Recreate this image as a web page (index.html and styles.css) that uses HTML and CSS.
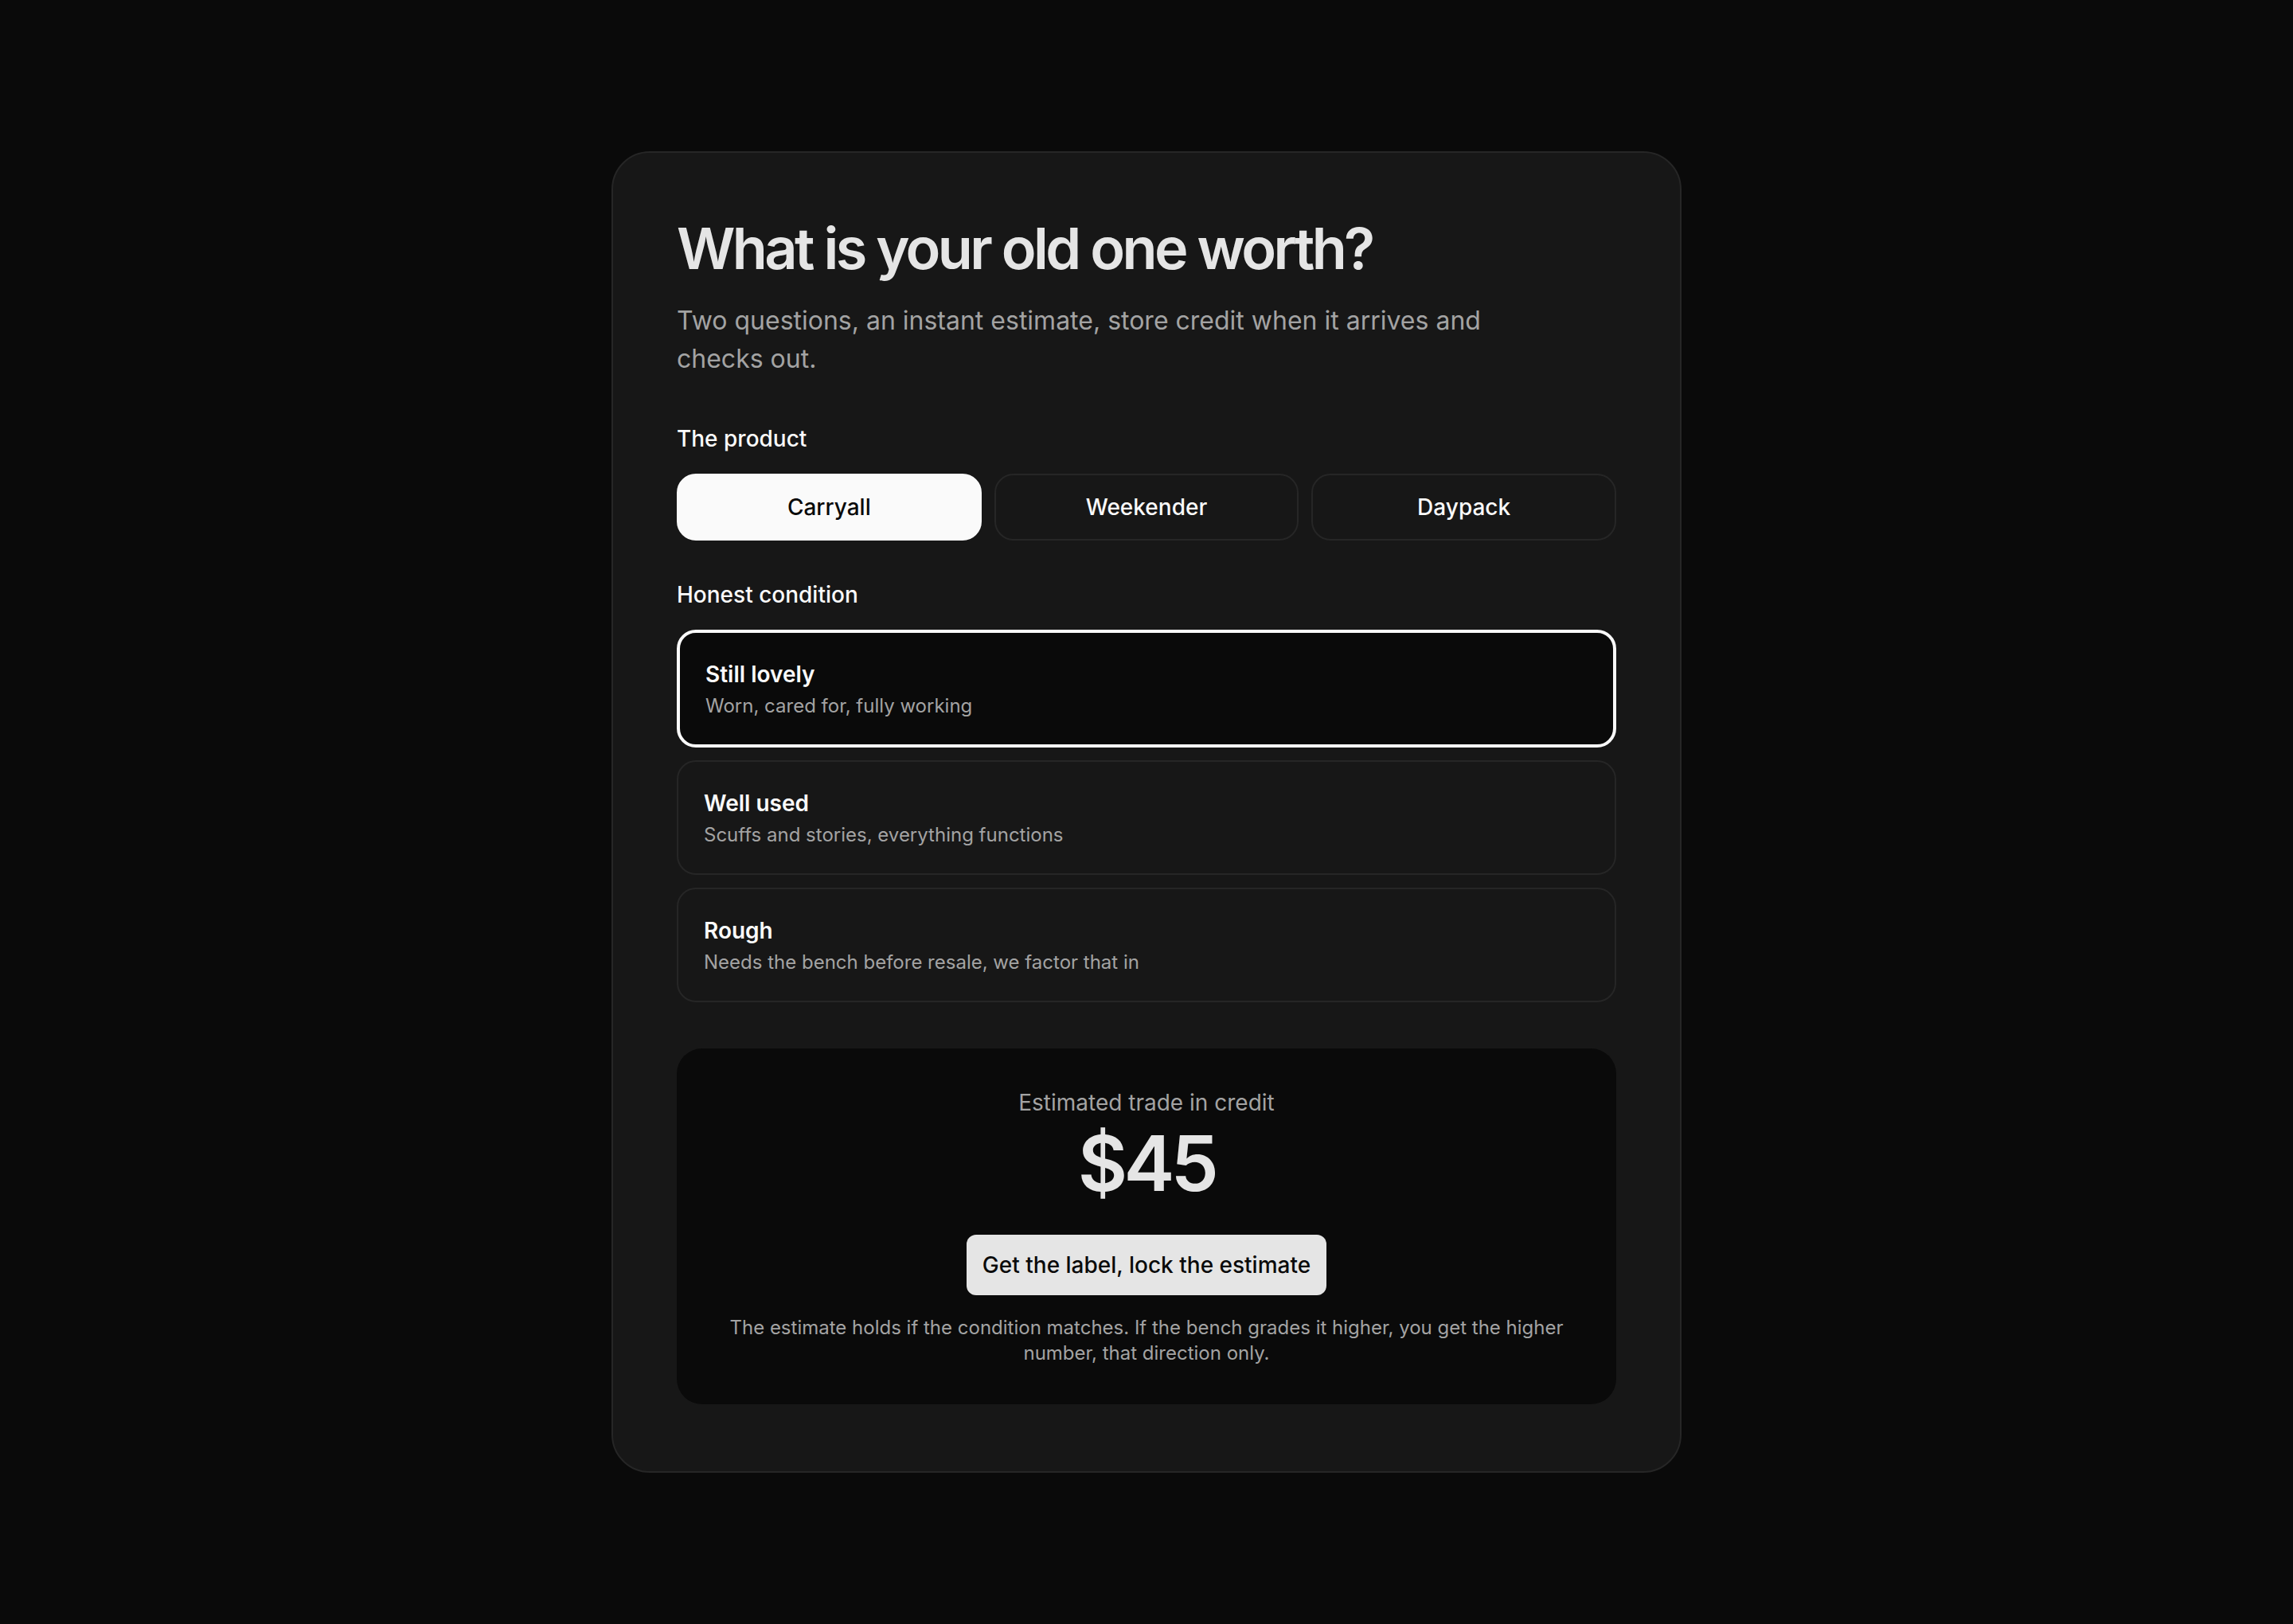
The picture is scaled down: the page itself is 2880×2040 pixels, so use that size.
FILE: index.html
```html
<!DOCTYPE html>
<html lang="en">
<head>
<meta charset="utf-8">
<title>Trade in estimate</title>
<link rel="stylesheet" href="styles.css">
</head>
<body>
<div class="page">
  <main class="card">
    <h1 class="title">What is your old one worth?</h1>
    <p class="subtitle">Two questions, an instant estimate, store credit when it arrives and checks out.</p>

    <section class="field field-product">
      <div class="label">The product</div>
      <div class="products">
        <button class="product is-active" type="button">Carryall</button>
        <button class="product" type="button">Weekender</button>
        <button class="product" type="button">Daypack</button>
      </div>
    </section>

    <section class="field field-condition">
      <div class="label">Honest condition</div>
      <div class="options">
        <button class="option is-active" type="button">
          <span class="option-title">Still lovely</span>
          <span class="option-desc">Worn, cared for, fully working</span>
        </button>
        <button class="option" type="button">
          <span class="option-title">Well used</span>
          <span class="option-desc">Scuffs and stories, everything functions</span>
        </button>
        <button class="option" type="button">
          <span class="option-title">Rough</span>
          <span class="option-desc">Needs the bench before resale, we factor that in</span>
        </button>
      </div>
    </section>

    <section class="result">
      <div class="result-label">Estimated trade in credit</div>
      <div class="result-value">$45</div>
      <button class="cta" type="button">Get the label, lock the estimate</button>
      <p class="result-note">The estimate holds if the condition matches. If the bench grades it higher, you get the higher number, that direction only.</p>
    </section>
  </main>
</div>
</body>
</html>
```

FILE: styles.css
```css
* {
  box-sizing: border-box;
}

html, body {
  margin: 0;
  padding: 0;
}

body {
  background: #0a0a0a;
  font-family: Inter, "Noto Sans", "Liberation Sans", sans-serif;
  color: #fafafa;
  -webkit-font-smoothing: antialiased;
}

.page {
  min-height: 100vh;
  display: flex;
  align-items: center;
  justify-content: center;
}

.card {
  width: 1344px;
  background: #171717;
  border: 2px solid #262626;
  border-radius: 48px;
  padding: 80px 80px 84px;
  display: flex;
  flex-direction: column;
}

.title {
  margin: 0;
  font-size: 72px;
  line-height: 80px;
  font-weight: 600;
  letter-spacing: -0.05em;
  color: #e5e5e5;
}

.subtitle {
  margin: 27px 0 0;
  max-width: 1024px;
  font-size: 32px;
  line-height: 48px;
  color: #a3a3a3;
}

.field-product {
  margin-top: 56px;
}

.field-condition {
  margin-top: 48px;
}

.label {
  font-size: 28px;
  line-height: 40px;
  font-weight: 500;
  color: #fafafa;
  margin-bottom: 24px;
}

.products {
  display: grid;
  grid-template-columns: repeat(3, 1fr);
  gap: 16px;
}

button {
  font-family: inherit;
  margin: 0;
  cursor: pointer;
}

.product {
  height: 84px;
  border: 2px solid #262626;
  border-radius: 24px;
  background: #171717;
  color: #fafafa;
  font-size: 28px;
  line-height: 40px;
  font-weight: 500;
  padding: 0 24px;
}

.product.is-active {
  background: #fafafa;
  border-color: #fafafa;
  color: #0a0a0a;
}

.options {
  display: flex;
  flex-direction: column;
  gap: 16px;
}

.option {
  display: flex;
  flex-direction: column;
  align-items: flex-start;
  text-align: left;
  width: 100%;
  padding: 32px;
  border: 2px solid #262626;
  border-radius: 24px;
  background: #171717;
  color: #fafafa;
}

.option.is-active {
  border: 4px solid #fafafa;
  background: #0a0a0a;
}

.option-title {
  font-size: 28px;
  line-height: 40px;
  font-weight: 600;
  color: #fafafa;
}

.option-desc {
  margin-top: 4px;
  font-size: 24px;
  line-height: 32px;
  color: #a3a3a3;
}

.result {
  margin-top: 58px;
  background: #0a0a0a;
  border-radius: 32px;
  padding: 48px;
  display: flex;
  flex-direction: column;
  align-items: center;
  text-align: center;
}

.result-label {
  font-size: 28px;
  line-height: 40px;
  color: #a3a3a3;
}

.result-value {
  margin-top: 8px;
  font-size: 96px;
  line-height: 96px;
  font-weight: 600;
  letter-spacing: -0.05em;
  color: #e5e5e5;
}

.cta {
  margin-top: 42px;
  height: 76px;
  padding: 0 20px;
  border: none;
  border-radius: 12px;
  background: #e5e5e5;
  color: #0a0a0a;
  font-size: 28px;
  line-height: 40px;
  font-weight: 500;
}

.result-note {
  margin: 25px 0 0;
  font-size: 24px;
  line-height: 32px;
  color: #a3a3a3;
}
```
